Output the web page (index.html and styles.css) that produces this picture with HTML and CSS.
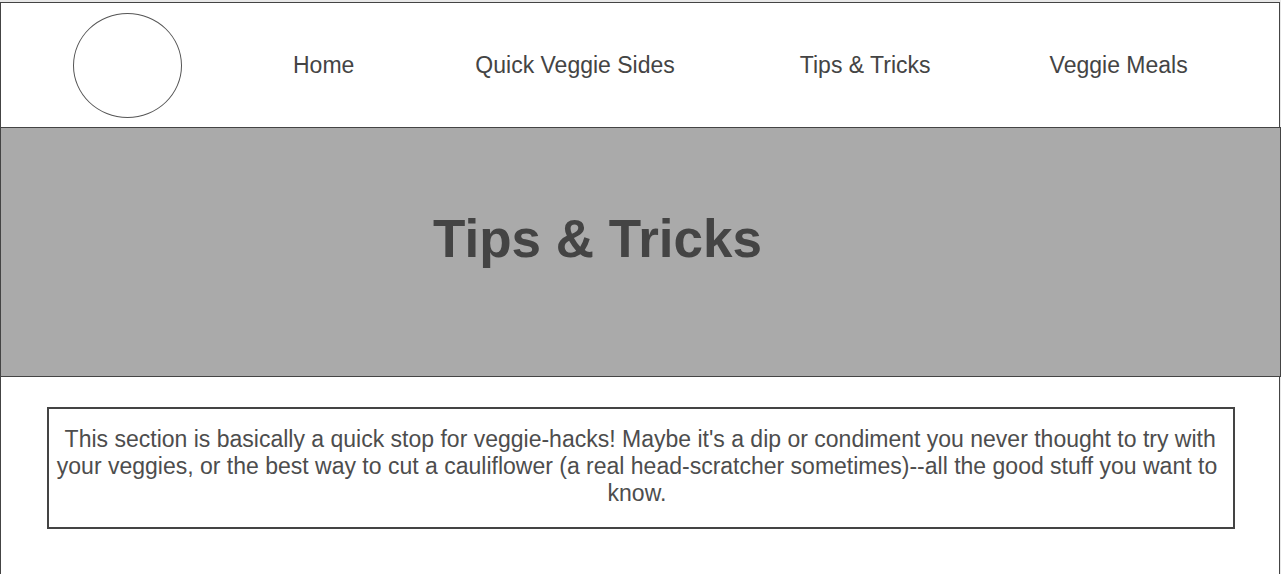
FILE: index.html
```html
<!DOCTYPE html>
<html>
<head>
<meta charset="utf-8">
<link rel="stylesheet" href="styles.css">
</head>
<body>
<div class="page">
  <header class="header">
    <div class="logo"></div>
    <nav class="nav">
      <a class="nav-item home">Home</a>
      <a class="nav-item sides">Quick Veggie Sides</a>
      <a class="nav-item tips">Tips &amp; Tricks</a>
      <a class="nav-item meals">Veggie Meals</a>
    </nav>
  </header>
  <section class="hero">
    <h1 class="hero-title">Tips &amp; Tricks</h1>
  </section>
  <main class="content">
    <div class="intro">&nbsp;This section is basically a quick stop for veggie-hacks! Maybe it's a dip or condiment you never thought to try with your veggies, or the best way to cut a cauliflower (a real head-scratcher sometimes)--all the good stuff you want to know.</div>
  </main>
</div>
</body>
</html>
```
FILE: styles.css
```css
html, body {
  margin: 0;
  padding: 0;
  background: #e8e8e8;
  font-family: "Liberation Sans", Arial, sans-serif;
  color: #444;
}
.page {
  margin-top: 2px;
  width: 1278px;
  border: 1px solid #444;
  border-bottom: none;
  background: #fff;
  min-height: 600px;
}
.header {
  height: 124px;
  display: flex;
  align-items: flex-start;
}
.logo {
  width: 107px;
  height: 103px;
  border: 1px solid #555;
  border-radius: 50%;
  margin: 10px 0 0 72px;
  flex: none;
}
.nav {
  display: flex;
  align-items: center;
  height: 124px;
}
.nav-item {
  font-size: 23px;
  color: #444;
  text-decoration: none;
  white-space: nowrap;
}
.home { margin-left: 111px; }
.sides { margin-left: 121px; }
.tips { margin-left: 125px; }
.meals { margin-left: 119px; }
.hero {
  margin: 0 -2px 0 -1px;
  height: 248px;
  border: 1px solid #444;
  background: #aaaaaa;
  display: flex;
  align-items: center;
}
.hero-title {
  margin: 0 0 0 432px;
  font-size: 53px;
  font-weight: bold;
  color: #444;
  position: relative;
  top: -14px;
}
.content {
  padding: 30px 44px 0 46px;
}
.intro {
  border: 2px solid #444;
  padding: 17px 14px 20px 6px;
  font-size: 23px;
  line-height: 27px;
  text-align: center;
  color: #4d4d4d;
}
```
